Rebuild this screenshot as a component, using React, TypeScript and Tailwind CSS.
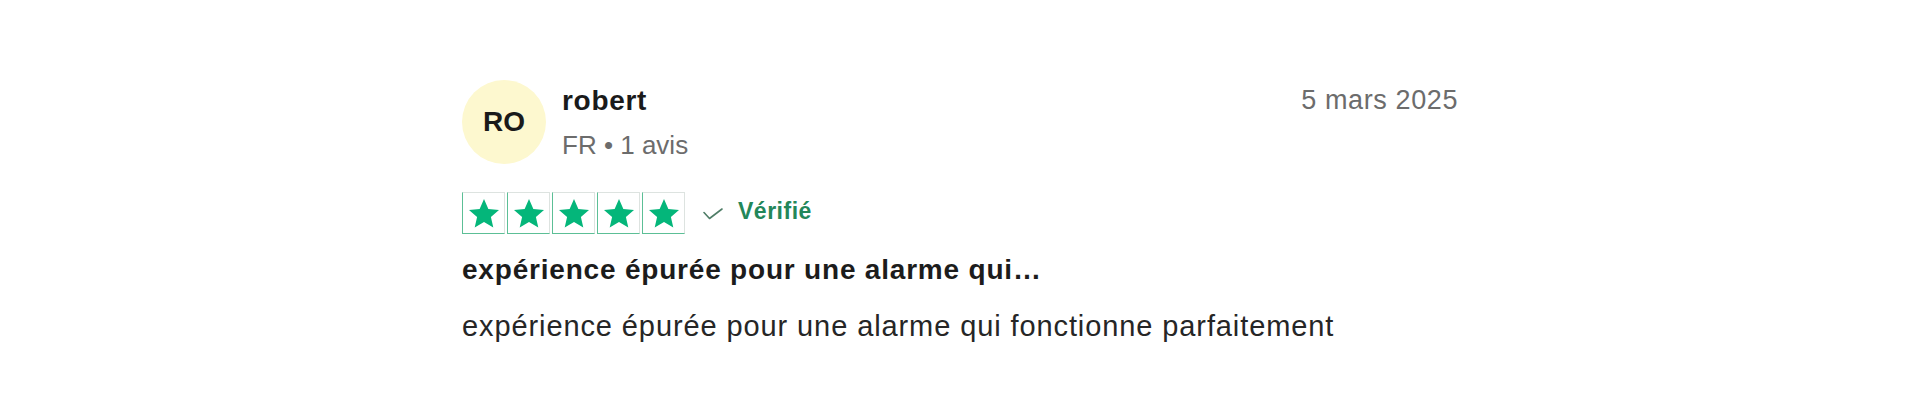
const STAR_POINTS = "12,2 14.9,8.6 22,9.3 16.6,14 18.2,21 12,17.3 5.8,21 7.4,14 2,9.3 9.1,8.6";

function StarBox() {
  return (
    <div className="w-[43px] h-[42px] flex items-center justify-center bg-white border border-t-[#dde3e0] border-r-[#dde3e0] border-l-[#5cbf96] border-b-[#5cbf96]">
      <svg viewBox="0 0 24 24" className="w-[36px] h-[36px] mt-[1px]">
        <polygon points={STAR_POINTS} fill="#04b67a" />
      </svg>
    </div>
  );
}

export default function App() {
  const review = {
    initials: "RO",
    name: "robert",
    meta: "FR • 1 avis",
    date: "5 mars 2025",
    title: "expérience épurée pour une alarme qui…",
    body: "expérience épurée pour une alarme qui fonctionne parfaitement",
    rating: 5,
  };

  return (
    <div className="min-h-screen w-full bg-white font-['Liberation_Sans',Arial,sans-serif]">
      <div className="mx-auto w-[996px] pt-[80px]">
        {/* header: avatar, name, date */}
        <div className="flex items-start">
          <div className="w-[84px] h-[84px] rounded-full bg-[#fdf8cf] flex items-center justify-center shrink-0">
            <span className="text-[28px] font-bold text-[#1a1a1a] leading-none">{review.initials}</span>
          </div>
          <div className="ml-4 flex flex-col">
            <span className="mt-[5px] text-[28px] leading-[32px] font-bold tracking-[0.7px] text-[#1a1a1a]">
              {review.name}
            </span>
            <span className="mt-[12px] text-[26px] leading-[32px] text-[#6c6c6c]">{review.meta}</span>
          </div>
          <span className="ml-auto mt-[4px] text-[27px] leading-[32px] tracking-[0.6px] text-[#6c6c6c]">
            {review.date}
          </span>
        </div>

        {/* rating */}
        <div className="mt-[28px] flex items-center">
          <div className="flex gap-[2px]">
            {Array.from({ length: review.rating }).map((_, i) => (
              <StarBox key={i} />
            ))}
          </div>
          <div className="ml-[18px] mb-[3px] flex items-center">
            <svg viewBox="0 0 20 12" className="w-[20px] h-[12px] mt-[4px]" fill="none">
              <path d="M1 4.5 L6.5 10.5 L19 1" stroke="#4f7d67" strokeWidth={1.6} strokeLinecap="round" strokeLinejoin="round" />
            </svg>
            <span className="ml-[15px] text-[23px] font-semibold tracking-[0.5px] text-[#23875a]">Vérifié</span>
          </div>
        </div>

        {/* content */}
        <h2 className="mt-[19px] text-[28px] leading-[34px] font-bold tracking-[0.8px] text-[#1c1c1c]">
          {review.title}
        </h2>
        <p className="mt-[22px] text-[29px] leading-[34px] tracking-[0.9px] text-[#262626]">{review.body}</p>
      </div>
    </div>
  );
}
